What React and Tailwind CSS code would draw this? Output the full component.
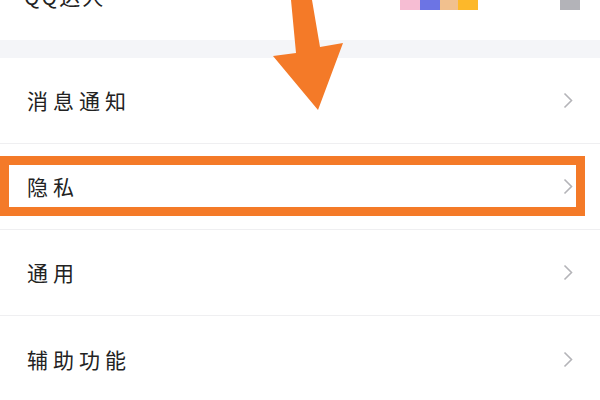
import React from "react";

const font = { fontFamily: '"Noto Sans CJK SC", "Noto Sans", sans-serif' };

function Chevron() {
  return (
    <svg width="10" height="17" viewBox="0 0 10 17" className="shrink-0">
      <polyline points="1.5,1.5 8.5,8.5 1.5,15.5" fill="none" stroke="#b4b4b8" strokeWidth="1.6" strokeLinejoin="miter" />
    </svg>
  );
}

function Row({ label, border = true, children }) {
  return (
    <div className={`relative flex h-[86px] items-center justify-between pl-[27px] pr-[27px] ${border ? "border-b border-[#efeff1]" : ""}`}>
      <span className="text-[21px] leading-none tracking-[5px] text-[#222222]">{label}</span>
      <Chevron />
      {children}
    </div>
  );
}

export default function App() {
  return (
    <div className="relative h-[400px] w-[600px] overflow-hidden bg-white" style={font}>
      {/* top row, mostly scrolled off */}
      <div className="flex h-[40px] items-start justify-between pl-[24px] pr-[20px]">
        <span className="-mt-[14px] text-[21px] leading-none tracking-[2px] text-[#222222]">QQ达人</span>
        <div className="flex items-start">
          <div className="flex">
            <div className="h-[10px] w-[20px] bg-[#f6bdd3]" />
            <div className="h-[10px] w-[20px] bg-[#6c74e4]" />
            <div className="h-[10px] w-[18px] bg-[#f1c08e]" />
            <div className="h-[10px] w-[20px] bg-[#fdb82a]" />
          </div>
          <div className="ml-[82px] h-[10px] w-[20px] bg-[#b3b3b8]" />
        </div>
      </div>
      <div className="h-[18px] bg-[#f4f5f8]" />
      <Row label="消息通知" />
      <Row label="隐私">
        <div className="absolute left-0 right-[15px] top-[12px] bottom-[13px] border-[9px] border-[#f47a28]" />
      </Row>
      <Row label="通用" />
      <Row label="辅助功能" border={false} />

      <svg className="absolute left-0 top-0" width="600" height="120" viewBox="0 0 600 120">
        <polygon
          points="291,0 312,0 320,47 343,43 318,110 273,56 296,53"
          fill="#f47a28"
        />
      </svg>
    </div>
  );
}
